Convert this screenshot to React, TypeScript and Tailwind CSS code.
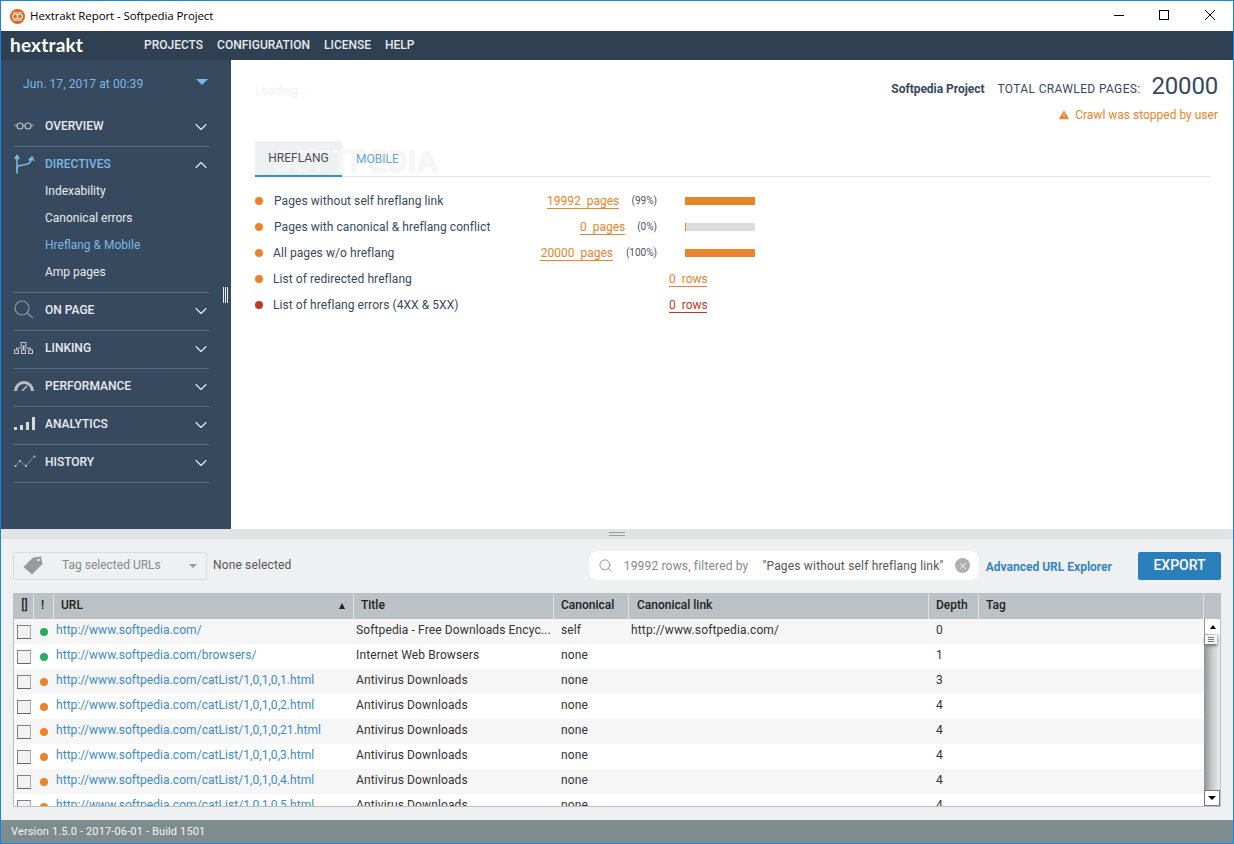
import { ChevronDown, ChevronUp, Search, TriangleAlert, X } from "lucide-react";
import type { ReactNode } from "react";

const roboto = "font-['Roboto',sans-serif]";

const GlassesIcon = () => (
  <svg width="20" height="10" viewBox="0 0 20 10" fill="none" stroke="#b8bfc6" strokeWidth="1.1">
    <circle cx="6" cy="5" r="3" />
    <circle cx="14" cy="5" r="3" />
    <path d="M9 4.4q1-.8 2 0M3 4.5 0.5 4M17 4.5 19.5 4" />
  </svg>
);

const BranchIcon = () => (
  <svg width="22" height="20" viewBox="0 0 22 20" fill="none" stroke="#7ab8e4" strokeWidth="1.6">
    <path d="M3 19.5V2M0.8 5 3 1.5 5.2 5" />
    <path d="M3 15c0-3 2-3.5 6-4 5-.7 8-1 8.500-7M14.500 6.500 18 3l2 4" />
  </svg>
);

const LensIcon = () => (
  <svg width="20" height="20" viewBox="0 0 20 20" fill="none" stroke="#8f9aa6" strokeWidth="1.2">
    <circle cx="8" cy="8" r="7" />
    <path d="M13 13l6 5" />
  </svg>
);

const SitemapIcon = () => (
  <svg width="19" height="12" viewBox="0 0 19 12" fill="none" stroke="#c4cad0" strokeWidth="1">
    <rect x="7" y="0.5" width="5" height="3.500" />
    <rect x="0.500" y="8" width="4" height="3.500" />
    <rect x="7.500" y="8" width="4" height="3.500" />
    <rect x="14.500" y="8" width="4" height="3.500" />
    <path d="M9.500 4v4M2.500 8V6h14v2" />
  </svg>
);

const GaugeIcon = () => (
  <svg width="20" height="11" viewBox="0 0 20 11" fill="none">
    <path d="M1.500 11a8.500 8.500 0 0 1 17 0" stroke="#b8bfc6" strokeWidth="3" />
    <path d="M8 11l5-5" stroke="#b8bfc6" strokeWidth="1.500" />
  </svg>
);

const BarsIcon = () => (
  <svg width="21" height="13" viewBox="0 0 21 13" fill="#d5d9dd">
    <rect x="0" y="10" width="3" height="3" />
    <rect x="6" y="8" width="3" height="5" />
    <rect x="12" y="5" width="3" height="8" />
    <rect x="18" y="0" width="3" height="13" />
  </svg>
);

const TrendIcon = () => (
  <svg width="22" height="13" viewBox="0 0 22 13" fill="#c4cad0" stroke="#8f9aa6" strokeWidth="0.8">
    <path d="M1.500 11 6 6l6 5 8-9.500" fill="none" />
    <circle cx="1.500" cy="11" r="1" stroke="none" />
    <circle cx="6" cy="6" r="1" stroke="none" />
    <circle cx="12" cy="11" r="1" stroke="none" />
    <circle cx="20.500" cy="1.500" r="1" stroke="none" />
  </svg>
);

const TagIcon = () => (
  <svg width="20" height="19" viewBox="0 0 20 19" fill="#9a9a9a">
    <path d="M10 1.500 18 0.500 19.500 8 9 18.500 0.500 11z" />
    <circle cx="15.500" cy="4" r="1.300" fill="#eef0f2" />
  </svg>
);

const sections: { label: string; icon: ReactNode }[] = [
  { label: "ON PAGE", icon: <LensIcon /> },
  { label: "LINKING", icon: <SitemapIcon /> },
  { label: "PERFORMANCE", icon: <GaugeIcon /> },
  { label: "ANALYTICS", icon: <BarsIcon /> },
  { label: "HISTORY", icon: <TrendIcon /> },
];

const stats = [
  { label: "Pages without self hreflang link", labelClass: "ml-[11px]", count: "19992  pages", countClass: "w-[72px] mr-[7px]", pct: "(99%)", fill: "w-full" },
  { label: "Pages with canonical & hreflang conflict", labelClass: "ml-[11px]", count: "0  pages", countClass: "w-[45px] mr-[1px]", pct: "(0%)", fill: "w-[1px]" },
  { label: "All pages w/o hreflang", labelClass: "ml-[10px]", count: "20000  pages", countClass: "w-[73px] mr-[13px]", pct: "(100%)", fill: "w-full" },
];

const rows = [
  { url: "http://www.softpedia.com/", title: "Softpedia - Free Downloads Encyc...", canonical: "self", link: "http://www.softpedia.com/", depth: "0", dot: "bg-[#27ae60]" },
  { url: "http://www.softpedia.com/browsers/", title: "Internet Web Browsers", canonical: "none", link: "", depth: "1", dot: "bg-[#27ae60]" },
  { url: "http://www.softpedia.com/catList/1,0,1,0,1.html", title: "Antivirus Downloads", canonical: "none", link: "", depth: "3", dot: "bg-[#e8842a]" },
  { url: "http://www.softpedia.com/catList/1,0,1,0,2.html", title: "Antivirus Downloads", canonical: "none", link: "", depth: "4", dot: "bg-[#e8842a]" },
  { url: "http://www.softpedia.com/catList/1,0,1,0,21.html", title: "Antivirus Downloads", canonical: "none", link: "", depth: "4", dot: "bg-[#e8842a]" },
  { url: "http://www.softpedia.com/catList/1,0,1,0,3.html", title: "Antivirus Downloads", canonical: "none", link: "", depth: "4", dot: "bg-[#e8842a]" },
  { url: "http://www.softpedia.com/catList/1,0,1,0,4.html", title: "Antivirus Downloads", canonical: "none", link: "", depth: "4", dot: "bg-[#e8842a]" },
  { url: "http://www.softpedia.com/catList/1,0,1,0,5.html", title: "Antivirus Downloads", canonical: "none", link: "", depth: "4", dot: "bg-[#e8842a]" },
];

const columns = "grid grid-cols-[20px_20px_300px_200px_75px_300px_50px_1fr]";

const HeaderCell = ({ children, className = "" }: { children?: ReactNode; className?: string }) => (
  <div className={`flex items-center border-r border-[#dfe2e4] h-full pb-[3px] ${className}`}>{children}</div>
);

const App = () => {
  return (
    <div className={`w-[1234px] h-[844px] flex flex-col border border-[#1a85dc] bg-white overflow-hidden ${roboto}`}>
      {/* title bar */}
      <div className="h-[30px] shrink-0 flex items-center bg-white">
        <div className="ml-[9px] w-[15px] h-[15px] rounded-full bg-[#e0661c] flex items-center justify-center">
          <svg width="13" height="9" viewBox="0 0 13 9" fill="none" stroke="#fff" strokeWidth="1.100">
            <circle cx="4.200" cy="4.500" r="2.500" />
            <circle cx="8.800" cy="4.500" r="2.500" />
            <path d="M2 0.700h9M2 8.300h9" strokeWidth="0.800" />
          </svg>
        </div>
        <span className="ml-[5px] text-[11.5px] text-black font-['Open_Sans',sans-serif] tracking-[-0.1px]">Hextrakt Report - Softpedia Project</span>
        <div className="ml-auto mr-[18px] -mt-[2px] flex items-center gap-[35px]">
          <svg width="10" height="10" viewBox="0 0 10 10" stroke="#000" strokeWidth="1" fill="none">
            <path d="M0 5.500h10" />
          </svg>
          <svg width="10" height="10" viewBox="0 0 10 10" stroke="#000" strokeWidth="1" fill="none">
            <rect x="0.500" y="0.500" width="9" height="9" />
          </svg>
          <svg className="ml-[1px]" width="10" height="10" viewBox="0 0 10 10" stroke="#000" strokeWidth="1" fill="none">
            <path d="M0 0l10 10M10 0 0 10" />
          </svg>
        </div>
      </div>

      {/* top nav */}
      <div className="h-[29px] shrink-0 flex items-center pb-[2px] bg-[#2f4052] text-[12px] text-[#e6eaee] font-medium">
        <span className="ml-[9px] w-[134px] text-[19px] leading-none font-bold text-white font-['Lato',sans-serif] tracking-[0.2px]">hextrakt</span>
        <nav className="flex gap-[14px]">
          <span>PROJECTS</span>
          <span>CONFIGURATION</span>
          <span>LICENSE</span>
          <span>HELP</span>
        </nav>
      </div>

      <div className="h-[469px] shrink-0 flex">
        {/* sidebar */}
        <aside className="relative w-[230px] shrink-0 bg-[#37495f] pl-[12px] pr-[22px] text-[12px] font-medium text-[#e8ecf0]">
          <div className="h-[47px] flex items-center justify-between pl-[10px] pr-[1px] text-[#7ab8e4] text-[12px] font-normal">
            <span className="tracking-[0.1px] mt-[1px]">Jun. 17, 2017 at 00:39</span>
            <span className="w-0 h-0 border-l-[6px] border-r-[6px] border-t-[6px] border-l-transparent border-r-transparent border-t-[#7ab8e4] -mt-[4px]" />
          </div>
          <div className="h-[40px] flex items-center border-b border-[#5a6a7e]">
            <span className="w-[32px] pl-[1px] flex -mt-[2px]"><GlassesIcon /></span>
            <span className="-mt-[2px]">OVERVIEW</span>
            <ChevronDown className="ml-auto -mr-[2px] w-[20px] h-[20px]" strokeWidth={1.3} />
          </div>
          <div className="border-b border-[#5a6a7e] pb-[7px]">
            <div className="h-[30px] flex items-center text-[#7ab8e4]">
              <span className="w-[32px] pl-[1px] flex mt-[4px]"><BranchIcon /></span>
              <span className="mt-[4px]">DIRECTIVES</span>
              <ChevronUp className="ml-auto -mr-[2px] mt-[6px] w-[20px] h-[20px] text-[#e8ecf0]" strokeWidth={1.3} />
            </div>
            <div className="pl-[32px] font-normal flex flex-col">
              <span className="h-[27px] flex items-center">Indexability</span>
              <span className="h-[27px] flex items-center">Canonical errors</span>
              <span className="h-[27px] flex items-center text-[#7ab8e4]">Hreflang &amp; Mobile</span>
              <span className="h-[27px] flex items-center">Amp pages</span>
            </div>
          </div>
          {sections.map((section) => (
            <div key={section.label} className="h-[38px] flex items-center border-b border-[#5a6a7e]">
              <span className="w-[32px] pl-[1px] flex -mt-[4px]">{section.icon}</span>
              <span className="-mt-[4px]">{section.label}</span>
              <ChevronDown className="ml-auto -mr-[2px] -mt-[1px] w-[20px] h-[20px]" strokeWidth={1.3} />
            </div>
          ))}
          <div className="absolute left-[222px] top-[227px] w-[5px] h-[16px] flex justify-between">
            <span className="w-px bg-[#e8ecf0]" />
            <span className="w-px bg-[#e8ecf0]" />
            <span className="w-px bg-[#e8ecf0]" />
          </div>
        </aside>

        {/* main panel */}
        <main className="relative flex-1 pl-[24px] pr-[23px] text-[#36495e]">
          <div className="h-[81px] relative flex flex-col items-end">
            <div className="flex items-center h-[52px] -mr-[8px]">
              <span className="mt-[6px] text-[12px] font-bold tracking-[-0.03px]">Softpedia Project</span>
              <span className="mt-[6px] ml-[13px] text-[12px] tracking-[0.35px]">TOTAL CRAWLED PAGES:</span>
              <span className="ml-[11px] text-[24px] font-normal leading-none tracking-[-0.2px]">20000</span>
            </div>
            <div className="flex items-center text-[12px] text-[#e8842a] -mr-[8px] -mt-[6px]">
              <TriangleAlert className="w-[12px] h-[12px] mr-[5px] fill-[#e8842a] text-white" strokeWidth={1.5} />
              <span>Crawl was stopped by user</span>
            </div>
            <span className="absolute left-0 top-[22px] text-[12px] text-[#f2f2f2]">Loading...</span>
          </div>

          <div className="h-[36px] flex border-b border-[#e4e6e8] text-[12px]">
            <div className="w-[87px] h-[36px] flex items-center justify-center bg-[#eef0f2] border-b-2 border-[#2f8ed6]">
              <span className="relative z-10 text-[#4a4f55]">HREFLANG</span>
            </div>
            <div className="ml-[14px] h-[36px] flex items-center">
              <span className="relative z-10 text-[#6aa7d6]">MOBILE</span>
            </div>
          </div>

          <div className="w-[500px] mt-[11px] text-[12px]">
            {stats.map((stat) => (
              <div key={stat.label} className="h-[26px] flex items-center">
                <span className="w-[8px] h-[8px] rounded-full bg-[#e8842a]" />
                <span className={`${stat.labelClass} tracking-[0.07px]`}>{stat.label}</span>
                <span className={`ml-auto mt-[2px] ${stat.countClass} text-right whitespace-pre border-b leading-[13px] text-[#e8842a] border-[#e8842a]`}>{stat.count}</span>
                <span className="text-[10px] text-[#4a5563] w-[31px] -mt-[2px] whitespace-nowrap shrink-0 flex justify-end">{stat.pct}</span>
                <div className="ml-[28px] w-[70px] h-[8px] bg-[#dcdcdc] shrink-0">
                  <div className={`h-full bg-[#e8842a] ${stat.fill}`} />
                </div>
              </div>
            ))}
            <div className="h-[26px] flex items-center">
              <span className="w-[8px] h-[8px] rounded-full bg-[#e8842a]" />
              <span className="ml-[10px] tracking-[0.07px]">List of redirected hreflang</span>
              <span className="ml-auto mt-[2px] mr-[48px] w-[38px] text-right whitespace-pre border-b leading-[13px] text-[#e8842a] border-[#e8842a]">{"0  rows"}</span>
            </div>
            <div className="h-[26px] flex items-center">
              <span className="w-[8px] h-[8px] rounded-full bg-[#c0392b]" />
              <span className="ml-[10px] tracking-[0.07px]">List of hreflang errors (4XX &amp; 5XX)</span>
              <span className="ml-auto mt-[2px] mr-[48px] w-[38px] text-right whitespace-pre border-b leading-[13px] text-[#c0392b] border-[#c0392b]">{"0  rows"}</span>
            </div>
          </div>

          <span className="absolute left-[42px] top-[86px] text-[31px] font-bold text-white/50 [text-shadow:0_0_2px_#ececec] leading-none pointer-events-none">SOFTPEDIA</span>
        </main>
      </div>

      {/* splitter */}
      <div className="h-[10px] shrink-0 bg-[#e2e3e4] flex flex-col items-center justify-center gap-[2px]">
        <span className="w-[16px] h-px bg-[#9a9a9a]" />
        <span className="w-[16px] h-px bg-[#9a9a9a]" />
      </div>

      {/* lower panel */}
      <section className="flex-1 min-h-0 bg-[#eef0f2] px-[12px] pt-[12px] text-[12px]">
        <div className="h-[29px] flex items-center">
          <div className="w-[194px] h-[28px] flex items-center border border-[#d9dbdd] rounded-[2px] pl-[9px] text-[#8a8a8a]">
            <TagIcon />
            <span className="ml-[19px] -mt-[2px]">Tag selected URLs</span>
            <span className="ml-auto mr-[9px] w-0 h-0 border-l-[4px] border-r-[4px] border-t-[4px] border-l-transparent border-r-transparent border-t-[#9a9a9a]" />
          </div>
          <span className="ml-[6px] -mt-[2px] text-[#555] tracking-[0.15px]">None selected</span>
          <div className="ml-auto w-[390px] h-[29px] flex items-center bg-white rounded-[9px] pl-[9px] text-[#888]">
            <Search className="w-[15px] h-[15px] text-[#777]" strokeWidth={1.2} />
            <span className="ml-[11px] tracking-[0.17px] whitespace-nowrap">19992 rows, filtered by</span>
            <span className="ml-[14px] text-[#555] tracking-[0.18px] whitespace-nowrap">"Pages without self hreflang link"</span>
            <span className="ml-[12px] w-[15px] h-[15px] shrink-0 rounded-full bg-[#b0b0b0] flex items-center justify-center">
              <X className="w-[10px] h-[10px] text-white" strokeWidth={2} />
            </span>
          </div>
          <span className="ml-[7px] mt-[2px] font-bold text-[#3586c0]">Advanced URL Explorer</span>
          <button className="ml-[26px] w-[83px] h-[28px] bg-[#2a7fba] rounded-[2px] text-white text-[14px] font-medium">EXPORT</button>
        </div>

        {/* url table */}
        <div className="mt-[13px] w-[1208px] h-[214px] flex flex-col border border-[#b9bfc3] overflow-hidden">
          <div className={`${columns} h-[25px] shrink-0 bg-[#bbc1c5] text-[#222] font-medium`}>
            <HeaderCell className="justify-center pl-[2px]">[]</HeaderCell>
            <HeaderCell className="pl-[7px]">!</HeaderCell>
            <HeaderCell className="pl-[7px]">
              URL
              <span className="ml-auto mr-[8px] mt-[2px] w-0 h-0 border-l-[3px] border-r-[3px] border-b-[6px] border-l-transparent border-r-transparent border-b-[#222]" />
            </HeaderCell>
            <HeaderCell className="pl-[7px]">Title</HeaderCell>
            <HeaderCell className="pl-[7px]">Canonical</HeaderCell>
            <HeaderCell className="pl-[8px]">Canonical link</HeaderCell>
            <HeaderCell className="pl-[7px]">Depth</HeaderCell>
            <HeaderCell className="pl-[7px] w-[225px]">Tag</HeaderCell>
          </div>
          <div className="flex-1 min-h-0 flex">
            <div className="w-[1190px] overflow-hidden">
              {rows.map((row, i) => (
                <div key={row.url} className={`${columns} h-[25px] items-center ${i % 2 === 0 ? "bg-[#f6f6f6]" : "bg-white"}`}>
                  <span className="ml-[3px] w-[14px] h-[14px] border border-[#808080] border-r-[#aaa] border-b-[#666] bg-[#f2f2f2]" />
                  <span className={`ml-[6px] w-[8px] h-[8px] rounded-full ${row.dot}`} />
                  <span className="pl-[2px] pb-[4px] text-[#3d8bc4] whitespace-nowrap tracking-[0.05px]">{row.url}</span>
                  <span className="pl-[2px] pb-[4px] text-[#333] whitespace-nowrap overflow-hidden tracking-[0.12px]">{row.title}</span>
                  <span className="pl-[7px] pb-[4px] text-[#333] tracking-[0.12px]">{row.canonical}</span>
                  <span className="pl-[2px] pb-[4px] text-[#333] whitespace-nowrap tracking-[0.15px]">{row.link}</span>
                  <span className="pl-[7px] pb-[4px] text-[#333]">{row.depth}</span>
                  <span />
                </div>
              ))}
            </div>
            <div className="w-[16px] shrink-0 flex flex-col bg-gradient-to-r from-[#8f9494] via-[#c8cbcb] to-[#ececec]">
              <div className="h-[15px] w-[15px] ml-[1px] bg-white flex items-center justify-center shrink-0">
                <span className="w-0 h-0 border-l-[3px] border-r-[3px] border-b-[4px] border-l-transparent border-r-transparent border-b-black" />
              </div>
              <div className="mt-[1px] ml-[1px] h-[9px] w-[12px] bg-[#f4f4f4] shadow-[0_2px_3px_#777] flex flex-col items-center justify-center gap-px shrink-0">
                <span className="w-[6px] h-px bg-[#777]" />
                <span className="w-[6px] h-px bg-[#777]" />
                <span className="w-[6px] h-px bg-[#777]" />
              </div>
              <div className="mt-auto h-[16px] bg-white border border-[#777] flex items-center justify-center shrink-0">
                <span className="w-0 h-0 border-l-[4px] border-r-[4px] border-t-[4px] border-l-transparent border-r-transparent border-t-black" />
              </div>
            </div>
          </div>
        </div>
      </section>

      {/* status bar */}
      <footer className="h-[23px] shrink-0 bg-[#7e8c8d] flex items-center pl-[10px] pt-[1px] text-[11px] text-[#f2f4f4] tracking-[0.15px]">
        Version 1.5.0 - 2017-06-01 - Build 1501
      </footer>
    </div>
  );
};

export default App;
